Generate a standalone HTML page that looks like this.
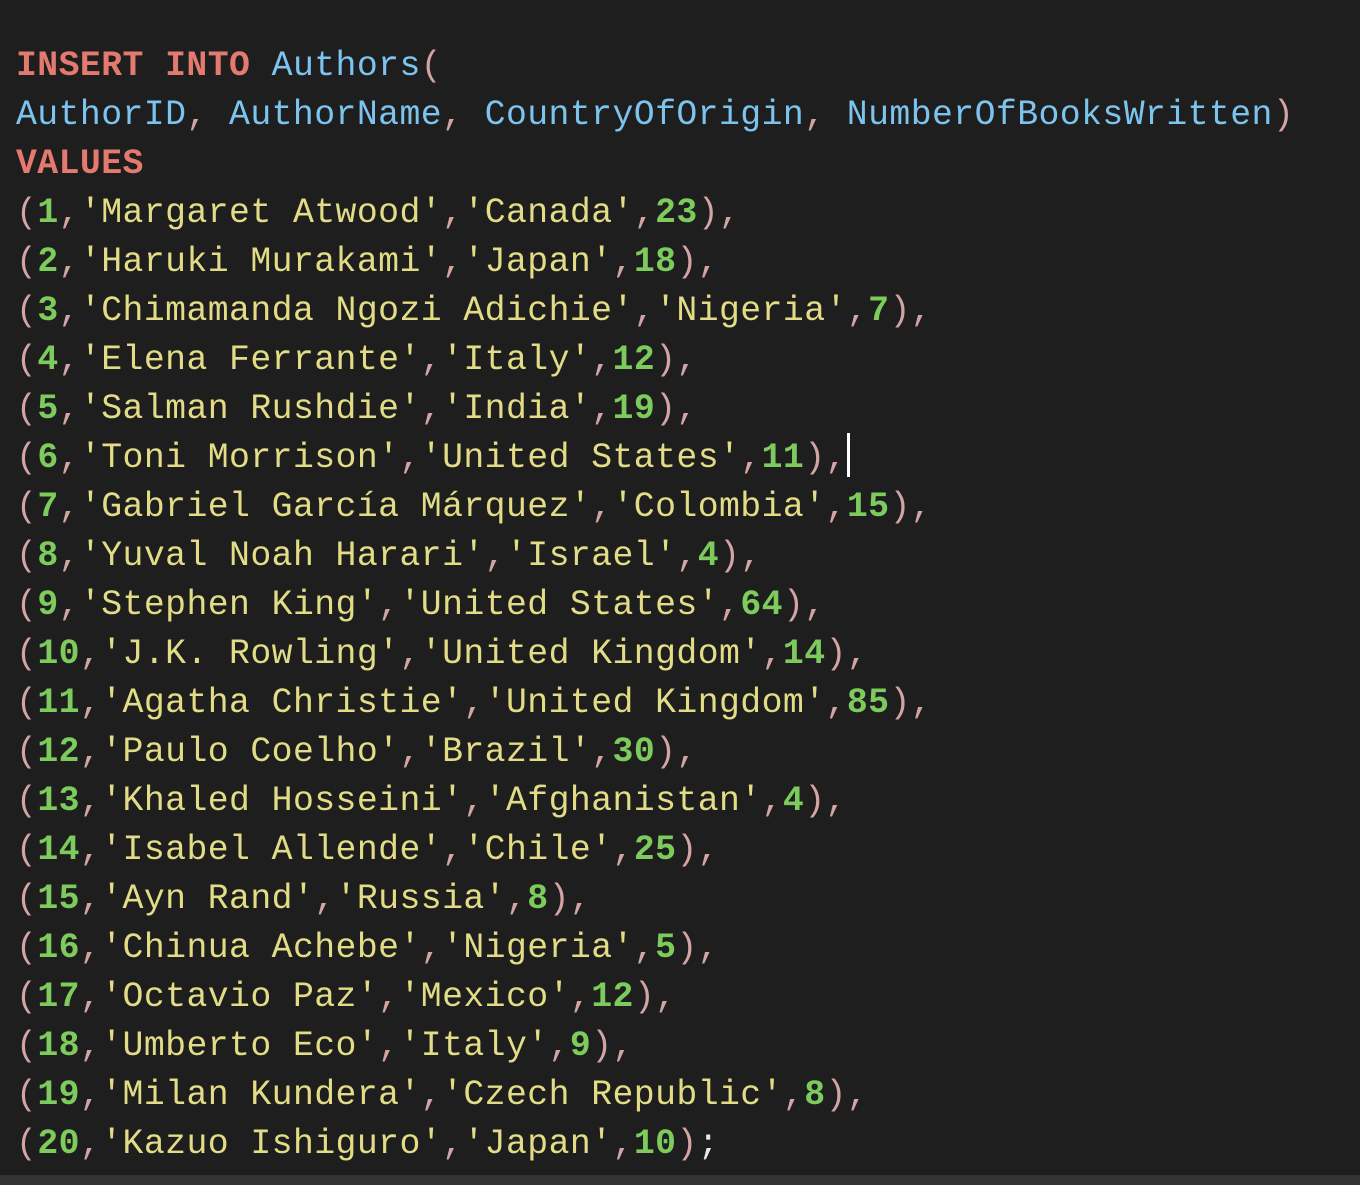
<!DOCTYPE html>
<html><head><meta charset="utf-8"><style>
html,body{margin:0;padding:0;background:#1e1e1e;width:1360px;height:1185px;overflow:hidden}
pre{margin:0;position:absolute;left:16px;top:42px;font-family:"Liberation Mono","DejaVu Sans Mono",monospace;font-size:34.8px;letter-spacing:0.42px;line-height:49px;color:#d4a3a3}
.k{color:#e3796f;font-weight:bold}.b{color:#7cc4ee}.s{color:#e3dc86}.n{color:#7ccb5c;font-weight:bold}.w{color:#e8e8e8}
.bar{position:absolute;left:0;top:1175px;width:1360px;height:10px;background:#333}
.cur{position:absolute;left:847px;top:433px;width:3px;height:44px;background:#fff}
</style></head><body>
<pre><span class="k">INSERT INTO</span> <span class="b">Authors</span>(
<span class="b">AuthorID</span>, <span class="b">AuthorName</span>, <span class="b">CountryOfOrigin</span>, <span class="b">NumberOfBooksWritten</span>)
<span class="k">VALUES</span>
(<span class="n">1</span>,<span class="s">'Margaret Atwood'</span>,<span class="s">'Canada'</span>,<span class="n">23</span>),
(<span class="n">2</span>,<span class="s">'Haruki Murakami'</span>,<span class="s">'Japan'</span>,<span class="n">18</span>),
(<span class="n">3</span>,<span class="s">'Chimamanda Ngozi Adichie'</span>,<span class="s">'Nigeria'</span>,<span class="n">7</span>),
(<span class="n">4</span>,<span class="s">'Elena Ferrante'</span>,<span class="s">'Italy'</span>,<span class="n">12</span>),
(<span class="n">5</span>,<span class="s">'Salman Rushdie'</span>,<span class="s">'India'</span>,<span class="n">19</span>),
(<span class="n">6</span>,<span class="s">'Toni Morrison'</span>,<span class="s">'United States'</span>,<span class="n">11</span>),
(<span class="n">7</span>,<span class="s">'Gabriel García Márquez'</span>,<span class="s">'Colombia'</span>,<span class="n">15</span>),
(<span class="n">8</span>,<span class="s">'Yuval Noah Harari'</span>,<span class="s">'Israel'</span>,<span class="n">4</span>),
(<span class="n">9</span>,<span class="s">'Stephen King'</span>,<span class="s">'United States'</span>,<span class="n">64</span>),
(<span class="n">10</span>,<span class="s">'J.K. Rowling'</span>,<span class="s">'United Kingdom'</span>,<span class="n">14</span>),
(<span class="n">11</span>,<span class="s">'Agatha Christie'</span>,<span class="s">'United Kingdom'</span>,<span class="n">85</span>),
(<span class="n">12</span>,<span class="s">'Paulo Coelho'</span>,<span class="s">'Brazil'</span>,<span class="n">30</span>),
(<span class="n">13</span>,<span class="s">'Khaled Hosseini'</span>,<span class="s">'Afghanistan'</span>,<span class="n">4</span>),
(<span class="n">14</span>,<span class="s">'Isabel Allende'</span>,<span class="s">'Chile'</span>,<span class="n">25</span>),
(<span class="n">15</span>,<span class="s">'Ayn Rand'</span>,<span class="s">'Russia'</span>,<span class="n">8</span>),
(<span class="n">16</span>,<span class="s">'Chinua Achebe'</span>,<span class="s">'Nigeria'</span>,<span class="n">5</span>),
(<span class="n">17</span>,<span class="s">'Octavio Paz'</span>,<span class="s">'Mexico'</span>,<span class="n">12</span>),
(<span class="n">18</span>,<span class="s">'Umberto Eco'</span>,<span class="s">'Italy'</span>,<span class="n">9</span>),
(<span class="n">19</span>,<span class="s">'Milan Kundera'</span>,<span class="s">'Czech Republic'</span>,<span class="n">8</span>),
(<span class="n">20</span>,<span class="s">'Kazuo Ishiguro'</span>,<span class="s">'Japan'</span>,<span class="n">10</span>)<span class="w">;</span></pre>
<div class="cur"></div>
<div class="bar"></div>
</body></html>
